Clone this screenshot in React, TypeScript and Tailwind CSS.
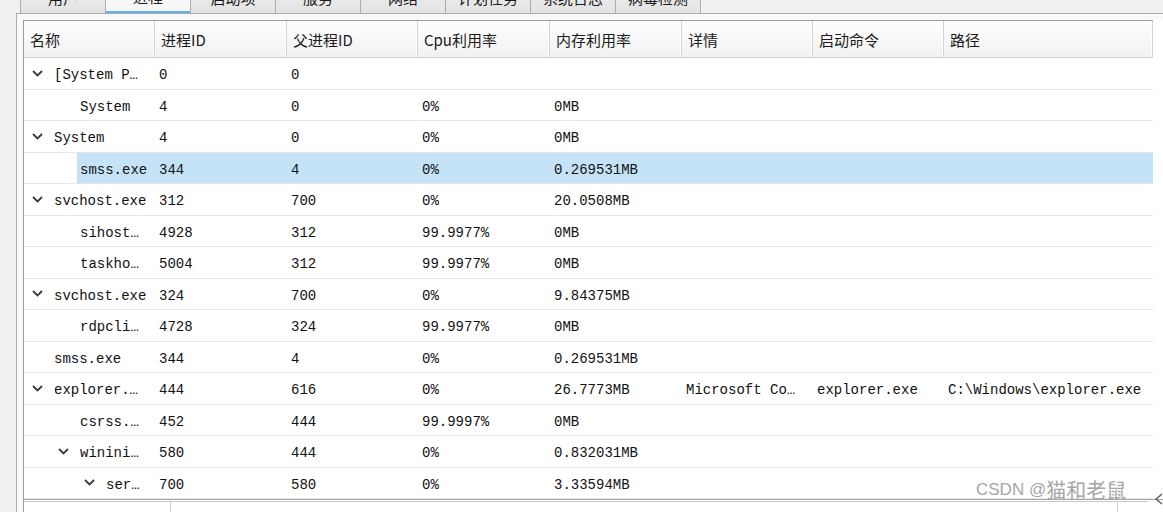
import React from 'react';

type Proc = {
  name: string;
  pid: string;
  ppid: string;
  cpu?: string;
  mem?: string;
  detail?: string;
  cmd?: string;
  path?: string;
  level: number;
  open?: boolean;
  selected?: boolean;
};

const tabs = ['用户', '进程', '启动项', '服务', '网络', '计划任务', '系统日志', '病毒检测'];
const columns = ['名称', '进程ID', '父进程ID', 'Cpu利用率', '内存利用率', '详情', '启动命令', '路径'];
const colWidths = 'grid-cols-[131px_132px_131px_132px_132px_131px_131px_209px]';

const rows: Proc[] = [
  { name: '[System P…', pid: '0', ppid: '0', level: 0, open: true },
  { name: 'System', pid: '4', ppid: '0', cpu: '0%', mem: '0MB', level: 1 },
  { name: 'System', pid: '4', ppid: '0', cpu: '0%', mem: '0MB', level: 0, open: true },
  { name: 'smss.exe', pid: '344', ppid: '4', cpu: '0%', mem: '0.269531MB', level: 1, selected: true },
  { name: 'svchost.exe', pid: '312', ppid: '700', cpu: '0%', mem: '20.0508MB', level: 0, open: true },
  { name: 'sihost…', pid: '4928', ppid: '312', cpu: '99.9977%', mem: '0MB', level: 1 },
  { name: 'taskho…', pid: '5004', ppid: '312', cpu: '99.9977%', mem: '0MB', level: 1 },
  { name: 'svchost.exe', pid: '324', ppid: '700', cpu: '0%', mem: '9.84375MB', level: 0, open: true },
  { name: 'rdpcli…', pid: '4728', ppid: '324', cpu: '99.9977%', mem: '0MB', level: 1 },
  { name: 'smss.exe', pid: '344', ppid: '4', cpu: '0%', mem: '0.269531MB', level: 0 },
  {
    name: 'explorer.…', pid: '444', ppid: '616', cpu: '0%', mem: '26.7773MB',
    detail: 'Microsoft Co…', cmd: 'explorer.exe', path: 'C:\\Windows\\explorer.exe', level: 0, open: true,
  },
  { name: 'csrss.…', pid: '452', ppid: '444', cpu: '99.9997%', mem: '0MB', level: 1 },
  { name: 'winini…', pid: '580', ppid: '444', cpu: '0%', mem: '0.832031MB', level: 1, open: true },
  { name: 'ser…', pid: '700', ppid: '580', cpu: '0%', mem: '3.33594MB', level: 2, open: true },
];

const Chevron = () => (
  <svg width="11" height="7" viewBox="0 0 11 7" className="shrink-0">
    <polyline points="1,1 5.5,5.5 10,1" fill="none" stroke="#3a3a3a" strokeWidth="1.8" />
  </svg>
);

const Row: React.FC<{ p: Proc }> = ({ p }) => {
  const hl = p.selected ? 'bg-[#c4e3f7]' : '';
  const cells = [p.pid, p.ppid, p.cpu, p.mem, p.detail, p.cmd, p.path];
  return (
    <div className={`grid ${colWidths} w-[1129px] h-[31.5px] border-b border-[#e6e6e6] shrink-0`}>
      <div className="flex items-center h-full overflow-hidden" style={{ paddingLeft: 8 + 26 * p.level }}>
        {p.open ? <Chevron /> : <div className="w-[11px] shrink-0" />}
        <div className="w-[8px] shrink-0" />
        <div className={`flex-1 h-full flex items-center pl-[3px] pt-[5px] whitespace-nowrap overflow-hidden ${hl}`}>
          {p.name}
        </div>
      </div>
      {cells.map((c, i) => (
        <div key={i} className={`flex items-center pl-[4px] pt-[5px] h-full whitespace-nowrap overflow-hidden ${hl}`}>
          {c ?? ''}
        </div>
      ))}
    </div>
  );
};

export default function App() {
  return (
    <div className="w-[1163px] h-[512px] bg-[#f0f0f0] overflow-hidden flex flex-col relative font-['Noto_Sans_CJK_SC',sans-serif] text-[#1a1a1a]">
      {/* Tab bar, cut off at the top */}
      <div className="h-[13px] flex items-end pl-[20px] shrink-0 overflow-hidden">
        {tabs.map((t, i) => (
          <div
            key={t}
            className={`w-[86px] h-[30px] shrink-0 flex items-center justify-center text-[15px] border border-b-0 border-[#acacac] -ml-px first:ml-0 ${
              i === 1
                ? 'bg-[#f7f7f7] border-b-2 border-b-[#5db4ef]'
                : 'bg-gradient-to-b from-[#f0f0f0] to-[#e3e3e3]'
            }`}
          >
            {t}
          </div>
        ))}
      </div>

      <div className="flex flex-1 min-h-0">
        <div className="w-[16px] shrink-0" />
        <div className="flex-1 flex flex-col border-l border-t border-[#acacac] bg-[#f9f9f9] pl-[6px] pt-[6px] min-h-0">
          {/* Tree table */}
          <div className="flex-1 flex flex-col bg-white border-l border-[#9c9c9c] min-h-0">
            <div className={`grid ${colWidths} w-[1129px] h-[38px] border-t border-b border-t-[#9c9c9c] border-b-[#d2d2d2] bg-gradient-to-b from-white to-[#f1f1f1] shrink-0`}>
              {columns.map((c) => (
                <div key={c} className="flex items-center pl-[6px] pt-[2px] text-[15px] border-r border-[#d2d2d2] shadow-[inset_-1px_0_0_#ffffff]">
                  {c}
                </div>
              ))}
            </div>
            <div className="flex flex-col font-['Liberation_Mono','Noto_Sans_CJK_SC',monospace] text-[14px] text-[#111]">
              {rows.map((p, i) => (
                <Row key={i} p={p} />
              ))}
            </div>
            {/* Horizontal scrollbar */}
            <div className="flex-1 min-h-0 border-t border-[#a6a6a6] flex flex-col">
              <div className="h-[2px] w-[1124px] border-b border-[#c8c8c8]" />
              <div className="flex-1 flex">
                <div className="w-[147px] border-r border-[#d0d0d0]" />
                <div className="w-[947px] border-r border-[#d0d0d0]" />
              </div>
            </div>
          </div>
        </div>
      </div>

      {/* Watermark */}
      <div className="absolute left-[976px] top-[480px] flex items-end text-[#a6a6a6] leading-none">
        <span className="font-['Liberation_Sans',sans-serif] text-[17px] mb-[2px]">CSDN @</span>
        <span className="font-['Noto_Sans_CJK_SC',sans-serif] text-[20px]">猫和老鼠</span>
      </div>
      <svg className="absolute left-[1154px] top-[493px]" width="9" height="12" viewBox="0 0 9 12">
        <polyline points="8,1 2,6 8,11" fill="none" stroke="#555" strokeWidth="1.3" />
      </svg>
    </div>
  );
}
